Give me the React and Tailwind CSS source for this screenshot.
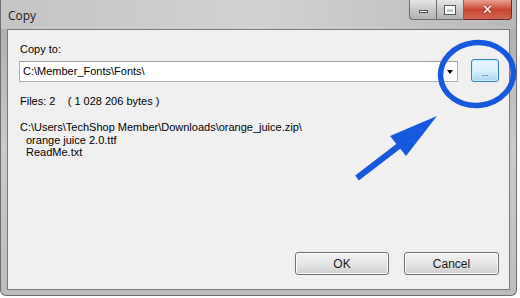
import React from "react";

function TitleButtons() {
  return (
    <div className="flex h-[20px] self-start mr-[4px]">
      <div className="w-[28px] h-[20px] rounded-bl-[4px] border border-[#6b6b6b] border-t-0 bg-gradient-to-b from-[#e6e6e6] via-[#c9c9c9] to-[#b4b4b4] flex items-center justify-center">
        <div className="w-[9px] h-[3px] bg-white border border-[#555] mt-[3px]" />
      </div>
      <div className="w-[27px] h-[20px] border-b border-r border-[#6b6b6b] bg-gradient-to-b from-[#e6e6e6] via-[#c9c9c9] to-[#b4b4b4] flex items-center justify-center">
        <div className="w-[10px] h-[8px] border-2 border-t-[3px] border-white outline outline-1 outline-[#555]" />
      </div>
      <div className="w-[48px] h-[20px] rounded-br-[4px] border border-[#6b2a22] border-t-0 border-l-0 bg-gradient-to-b from-[#e8a08f] via-[#c8452f] to-[#d06650] flex items-center justify-center">
        <span className="text-white font-bold text-[13px] leading-none [font-family:'DejaVu_Sans',sans-serif] [text-shadow:0_0_2px_#5a1a10]">✕</span>
      </div>
    </div>
  );
}

function WinButton({ children }) {
  return (
    <div className="h-[23px] rounded-[3px] border border-[#707070] bg-gradient-to-b from-[#f2f2f2] from-0% via-[#e6e6e6] via-50% to-[#cfcfcf] to-100% flex items-center justify-center shadow-[inset_0_0_0_1px_#fbfbfb] text-[12px] text-[#1a1a1a]">
      {children}
    </div>
  );
}

export default function App() {
  return (
    <div className="relative w-[520px] h-[298px] bg-white overflow-hidden [font-family:'Liberation_Sans',Arial,sans-serif]">
      <div className="w-[517px] h-[296px] flex flex-col rounded-b-[6px] border border-t-0 border-[#6e6e6e] bg-gradient-to-b from-[#a9a9a9] via-[#cbcbcb] to-[#bdbdbd]">
        <div className="h-[29px] flex justify-between shrink-0 bg-gradient-to-r from-[#c4c4c4] via-[#d2d2d2] to-[#b9b9b9]">
          <div className="pl-[7px] pt-[7px] text-[12px] text-[#1b1b1b] [font-family:'Open_Sans',sans-serif]">Copy</div>
          <TitleButtons />
        </div>
        <div className="flex-1 mx-[6px] mb-[5px] border border-[#7a7a7a] bg-[#f0f0f0] flex flex-col pl-[12px] pr-[10px] pt-[13px] pb-[14px] text-[11px] text-black">
          <div className="leading-[13px]">Copy to:</div>
          <div className="flex items-end mt-[3px] h-[23px]">
            <div className="ml-[-1px] w-[439px] h-[21px] bg-white border border-[#abadb3] border-t-[#9a9a9a] flex items-center justify-between">
              <span className="pl-[3px] text-[11px]">C:\Member_Fonts\Fonts\</span>
              <div className="w-[15px] h-full flex items-center justify-center">
                <div className="w-0 h-0 border-l-[3.5px] border-r-[3.5px] border-t-[4px] border-l-transparent border-r-transparent border-t-black" />
              </div>
            </div>
            <div className="ml-auto w-[28px] h-[23px] rounded-[3px] border border-[#3c7fb1] bg-gradient-to-b from-[#eaf6fd] via-[#d9f0fc] to-[#a7d9f5] shadow-[inset_0_0_0_1px_#c0f0ff] flex items-end justify-center pb-[3px] text-[9px] leading-none text-[#333]">
              ...
            </div>
          </div>
          <div className="mt-[13px] leading-[13px] whitespace-pre">Files: 2    ( 1 028 206 bytes )</div>
          <div className="mt-[13px] leading-[12.5px]">
            <div>C:\Users\TechShop Member\Downloads\orange_juice.zip\</div>
            <div className="pl-[6px]">orange juice 2.0.ttf</div>
            <div className="pl-[6px]">ReadMe.txt</div>
          </div>
          <div className="mt-auto flex justify-end gap-[15px] pr-[0px]">
            <div className="w-[94px]"><WinButton>OK</WinButton></div>
            <div className="w-[95px]"><WinButton>Cancel</WinButton></div>
          </div>
        </div>
      </div>
      <svg className="absolute left-0 top-0 pointer-events-none" width="520" height="298" viewBox="0 0 520 298">
        <ellipse cx="477" cy="74" rx="36.5" ry="31.5" fill="none" stroke="#1659df" strokeWidth="5.5" transform="rotate(-6 477 74)" />
        <line x1="357" y1="178" x2="404" y2="142" stroke="#1659df" strokeWidth="6" strokeLinecap="butt" />
        <polygon points="437,116 390,136 406,156" fill="#1659df" />
      </svg>
    </div>
  );
}
